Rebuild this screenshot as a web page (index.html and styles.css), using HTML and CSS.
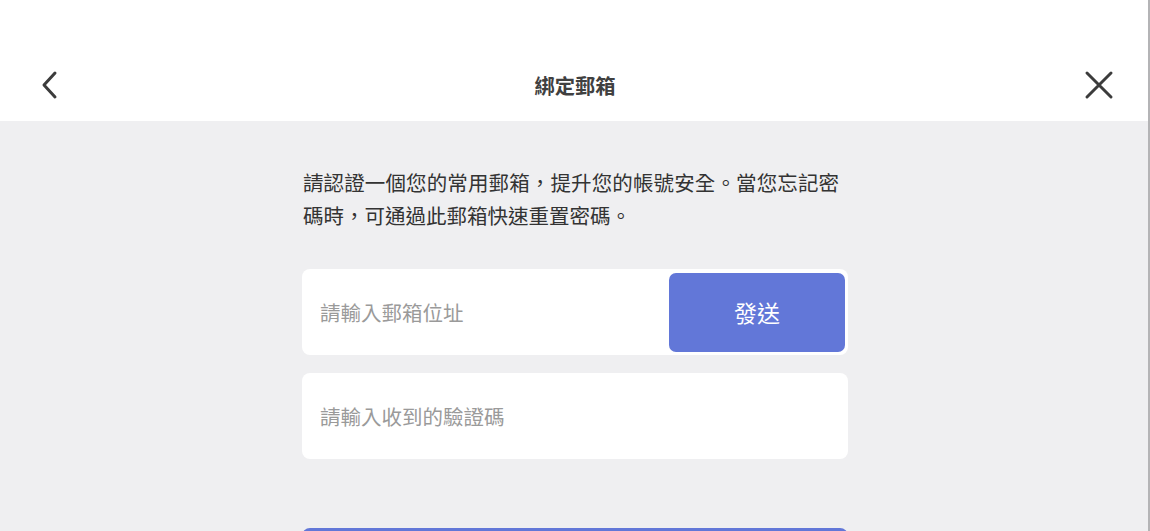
FILE: index.html
```html
<!DOCTYPE html>
<html lang="zh-Hant">
<head>
<meta charset="utf-8">
<title>綁定郵箱</title>
<link rel="stylesheet" href="styles.css">
</head>
<body>
<div class="page">
  <header class="header">
    <button class="icon-btn" aria-label="返回">
      <svg width="26" height="30" viewBox="0 0 26 30"><path d="M17 3 L6 15 L17 27" fill="none" stroke="#3c3c3c" stroke-width="3" stroke-linecap="round" stroke-linejoin="round"/></svg>
    </button>
    <h1 class="title">綁定郵箱</h1>
    <button class="icon-btn" aria-label="關閉">
      <svg width="30" height="30" viewBox="0 0 30 30"><path d="M3 3 L27 27 M27 3 L3 27" fill="none" stroke="#3c3c3c" stroke-width="3" stroke-linecap="round"/></svg>
    </button>
  </header>
  <main class="main">
    <div class="column">
      <p class="desc">請認證一個您的常用郵箱，提升您的帳號安全。當您忘記密碼時，可通過此郵箱快速重置密碼。</p>
      <div class="field field-email">
        <span class="placeholder">請輸入郵箱位址</span>
        <button class="send-btn">發送</button>
      </div>
      <div class="field">
        <span class="placeholder">請輸入收到的驗證碼</span>
      </div>
      <button class="submit-btn"></button>
    </div>
  </main>
</div>
</body>
</html>
```
FILE: styles.css
```css
html, body {
  margin: 0;
  padding: 0;
  height: 100%;
  overflow: hidden;
}
body {
  font-family: "Noto Sans CJK TC", "Noto Sans", sans-serif;
  background: #efeff1;
}
.page {
  height: 531px;
  border-right: 2px solid #b4b4b6;
  box-sizing: border-box;
  display: flex;
  flex-direction: column;
  overflow: hidden;
}
.header {
  height: 121px;
  background: #ffffff;
  display: flex;
  align-items: center;
  justify-content: space-between;
  padding: 49px 34px 0 36px;
  box-sizing: border-box;
  flex-shrink: 0;
}
.icon-btn {
  border: 0;
  background: none;
  padding: 0;
  display: flex;
  align-items: center;
  justify-content: center;
  width: 30px;
  height: 30px;
}
.title {
  margin: 0;
  font-size: 20.3px;
  font-weight: 700;
  color: #404040;
}
.main {
  flex: 1;
  display: flex;
  justify-content: center;
  padding-top: 45px;
}
.column {
  width: 546px;
  display: flex;
  flex-direction: column;
  margin-left: 2px;
}
.desc {
  margin: 0 0 0 1px;
  width: 536px;
  font-size: 20.5px;
  line-height: 33px;
  color: #333333;
  text-align: justify;
}
.field {
  margin-top: 35px;
  height: 86px;
  background: #ffffff;
  border-radius: 8px;
  display: flex;
  align-items: center;
  justify-content: space-between;
  padding: 0 3px 0 18px;
  box-sizing: border-box;
}
.field + .field {
  margin-top: 18px;
}
.field-email {
  margin-top: 37px;
}
.placeholder {
  font-size: 20.5px;
  color: #9a9a9a;
}
.send-btn {
  width: 176px;
  height: 79px;
  border: 0;
  border-radius: 7px;
  background: #6277d8;
  color: #ffffff;
  font-family: inherit;
  font-size: 23px;
}
.submit-btn {
  margin-top: 69px;
  height: 80px;
  border: 0;
  border-radius: 8px;
  background: #6277d8;
  flex-shrink: 0;
}
```
